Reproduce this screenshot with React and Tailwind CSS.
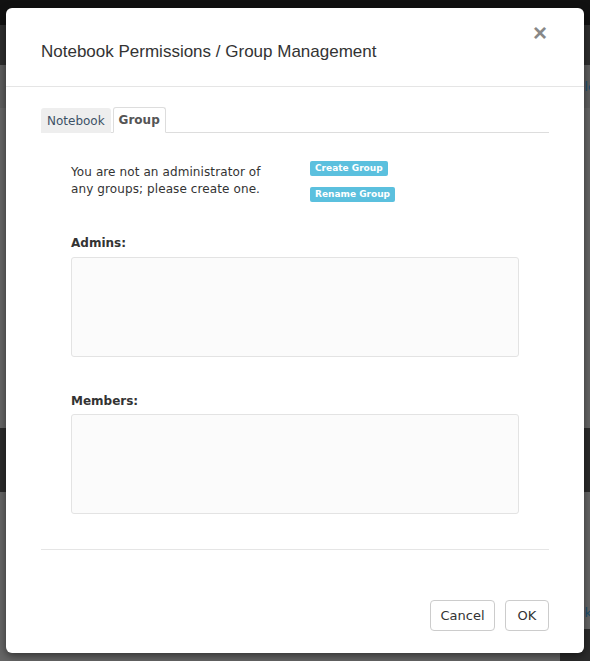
import React from "react";

export default function App() {
  return (
    <div className="relative w-[590px] h-[661px] overflow-hidden bg-[#666666]" style={{ fontFamily: '"DejaVu Sans", sans-serif' }}>
      {/* dimmed page behind */}
      <div className="flex flex-col h-full">
        <div className="h-[25px] bg-[#111111]" />
        <div className="h-[40px] bg-[#2e2e2e]" />
        <div className="h-[43px] bg-[#5e5e5e] flex justify-end items-center">
          <span className="text-[13px] text-[#1d4f6e] mr-[-6px]">le</span>
        </div>
        <div className="h-[320px] bg-[#666666]" />
        <div className="h-[64px] bg-[#2b2b2b]" />
        <div className="flex-1 bg-[#666666] flex flex-col items-end">
          <span className="mt-[114px] text-[13px] text-[#1d4f6e] mr-[-2px] leading-none">k</span>
          <div className="w-[30px] mt-[10px] flex-1 bg-[#2b2b2b]" />
        </div>
      </div>

      {/* modal */}
      <div className="absolute left-[6px] top-[8px] w-[578px] h-[645px] bg-white rounded-[6px] shadow-[0_3px_9px_rgba(0,0,0,0.5)] flex flex-col">
        <div className="h-[79px] border-b border-[#e5e5e5] flex items-center pl-[35px] pr-[37px] relative">
          <h4 className="text-[17px] text-[#333] mt-[9px]" style={{ fontFamily: '"Liberation Sans", Arial, sans-serif' }}>
            Notebook Permissions / Group Management
          </h4>
          <span className="absolute right-[37px] top-[13px] text-[24px] font-bold text-[#888] leading-none" style={{ fontFamily: '"Liberation Sans", Arial, sans-serif' }}>×</span>
        </div>

        <div className="px-[35px] pt-[20px] flex flex-col">
          <div className="flex border-b border-[#dddddd] h-[26px] items-end gap-[2px]">
            <div className="h-[25px] px-[6px] bg-[#eeeeee] text-[12px] text-[#3d5166] flex items-center rounded-t-[3px] -mb-px">Notebook</div>
            <div className="h-[26px] w-[53px] justify-center bg-white border border-[#dddddd] border-b-white text-[12px] font-bold text-[#555] flex items-center rounded-t-[3px] -mb-px">Group</div>
          </div>

          <div className="pl-[30px] pr-[30px] pt-[31px] flex flex-col">
            <div className="flex">
              <p className="w-[239px] pr-[30px] text-[12px] leading-[17px] text-[#333] tracking-[0.1px]">
                You are not an administrator of any groups; please create one.
              </p>
              <div className="flex flex-col gap-[11px] -mt-[3px]">
                <span className="self-start bg-[#5bc0de] text-white font-bold text-[9px] px-[5px] h-[15px] flex items-center rounded-[2px]">Create Group</span>
                <span className="self-start bg-[#5bc0de] text-white font-bold text-[9px] px-[5px] h-[15px] flex items-center rounded-[2px]">Rename Group</span>
              </div>
            </div>

            <label className="mt-[33px] text-[12px] font-bold text-[#333] leading-[17px]">Admins:</label>
            <div className="mt-[5px] h-[100px] w-[448px] bg-[#fbfbfb] border border-[#e3e3e3] rounded-[3px]" />

            <label className="mt-[36px] text-[12px] font-bold text-[#333] leading-[17px]">Members:</label>
            <div className="mt-[4px] h-[100px] w-[448px] bg-[#fbfbfb] border border-[#e3e3e3] rounded-[3px]" />
          </div>

          <div className="mt-[35px] border-t border-[#e5e5e5]" />

          <div className="flex justify-end gap-[10px] mt-[50px]">
            <button className="h-[31px] w-[65px] border border-[#cccccc] rounded-[4px] text-[13px] text-[#333] bg-white">Cancel</button>
            <button className="h-[31px] w-[44px] border border-[#cccccc] rounded-[4px] text-[13px] text-[#333] bg-white">OK</button>
          </div>
        </div>
      </div>
    </div>
  );
}
